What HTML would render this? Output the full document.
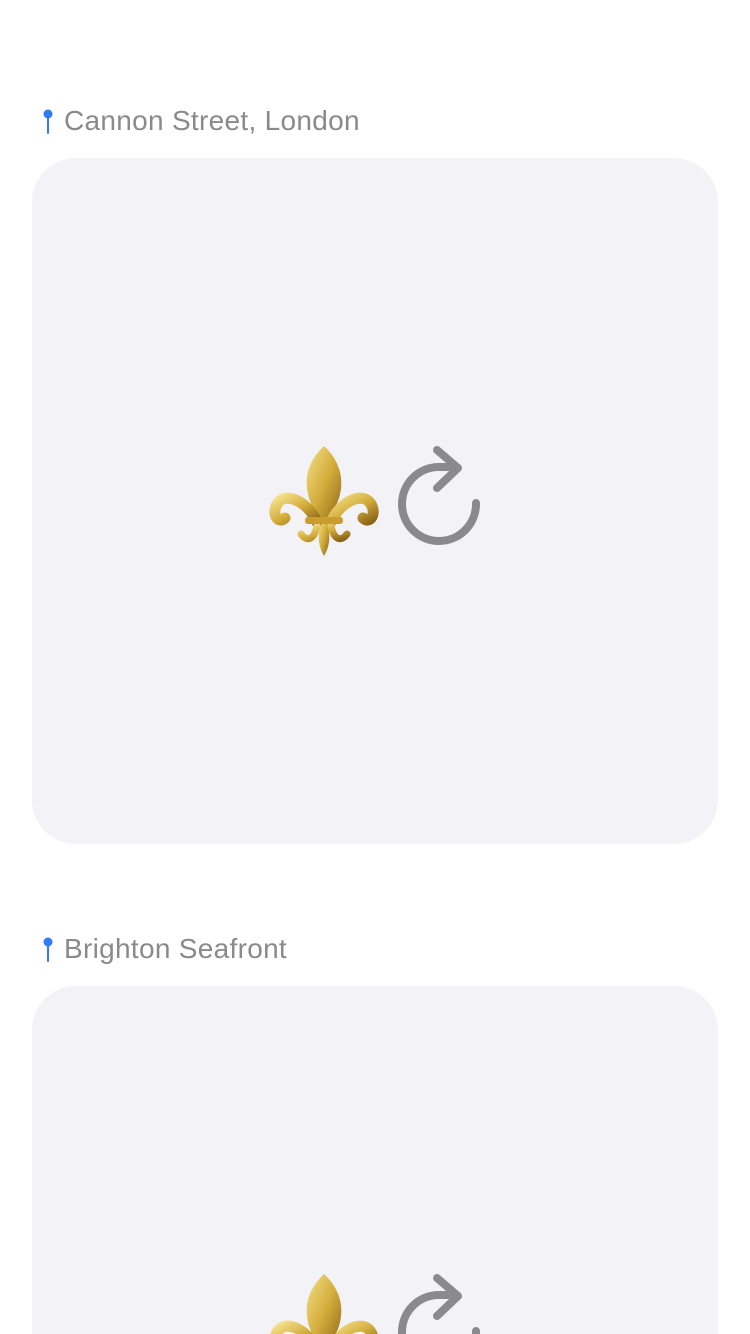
<!DOCTYPE html>
<html><head><meta charset="utf-8"><style>
html,body{margin:0;padding:0;background:#fff;width:750px;height:1334px;overflow:hidden;position:relative;font-family:"Liberation Sans",sans-serif}
.lbl{position:absolute;left:64px;font-size:28px;letter-spacing:0.3px;color:#8a8a8e;line-height:30px}
.pin{position:absolute;left:42px;width:12px;height:26px}
.card{position:absolute;left:32px;width:686px;border-radius:44px;background:#f2f2f7}
svg.ic{position:absolute}
</style></head><body>
<svg class="pin" style="top:109px" viewBox="0 0 12 26"><circle cx="6" cy="5" r="4.5" fill="#2f7cf6"/><rect x="5" y="7" width="2" height="18" rx="1" fill="#2f7cf6"/></svg>
<div class="lbl" style="top:106px">Cannon Street, London</div>
<div class="card" style="top:158px;height:686px"></div>
<svg class="pin" style="top:937px" viewBox="0 0 12 26"><circle cx="6" cy="5" r="4.5" fill="#2f7cf6"/><rect x="5" y="7" width="2" height="18" rx="1" fill="#2f7cf6"/></svg>
<div class="lbl" style="top:934px">Brighton Seafront</div>
<div class="card" style="top:986px;height:348px;border-radius:44px 44px 0 0"></div>

<svg class="ic" style="left:0;top:0" width="750" height="1334">
<defs>
<linearGradient id="g" x1="0" y1="0" x2="1" y2="1"><stop offset="0" stop-color="#f4e08a"/><stop offset=".5" stop-color="#d4ad3c"/><stop offset="1" stop-color="#8a6416"/></linearGradient>
<g id="f">
<path d="M53 0 C38 14 32 32 38 52 C42 64 48 70 53 78 C58 70 64 64 68 52 C74 32 68 14 53 0Z" fill="url(#g)"/>
<path d="M46 76 C36 54 12 44 5 60 C1 70 8 78 14 72" fill="none" stroke="url(#g)" stroke-width="11" stroke-linecap="round"/>
<path d="M60 76 C70 54 94 44 101 60 C105 70 98 78 92 72" fill="none" stroke="url(#g)" stroke-width="11" stroke-linecap="round"/>
<path d="M53 72 C45 86 47 100 53 110 C59 100 61 86 53 72Z" fill="url(#g)"/>
<path d="M46 80 C43 94 36 96 30 88 M60 80 C63 94 70 96 76 88" fill="none" stroke="url(#g)" stroke-width="7" stroke-linecap="round"/>
<rect x="34" y="71" width="38" height="7" rx="3" fill="#c99e2e"/>
</g>
<g id="r" fill="none" stroke="#8a8a8e" stroke-width="8" stroke-linecap="round" stroke-linejoin="round">
<path d="M476 503 A37 37 0 1 1 439 467 L456 467"/>
<path d="M437 450 L458 468 L437 488"/>
</g>
</defs>
<use href="#f" x="271" y="446"/>
<use href="#r"/>
<use href="#f" x="271" y="1274"/>
<use href="#r" y="828"/>
</svg>
</body></html>
